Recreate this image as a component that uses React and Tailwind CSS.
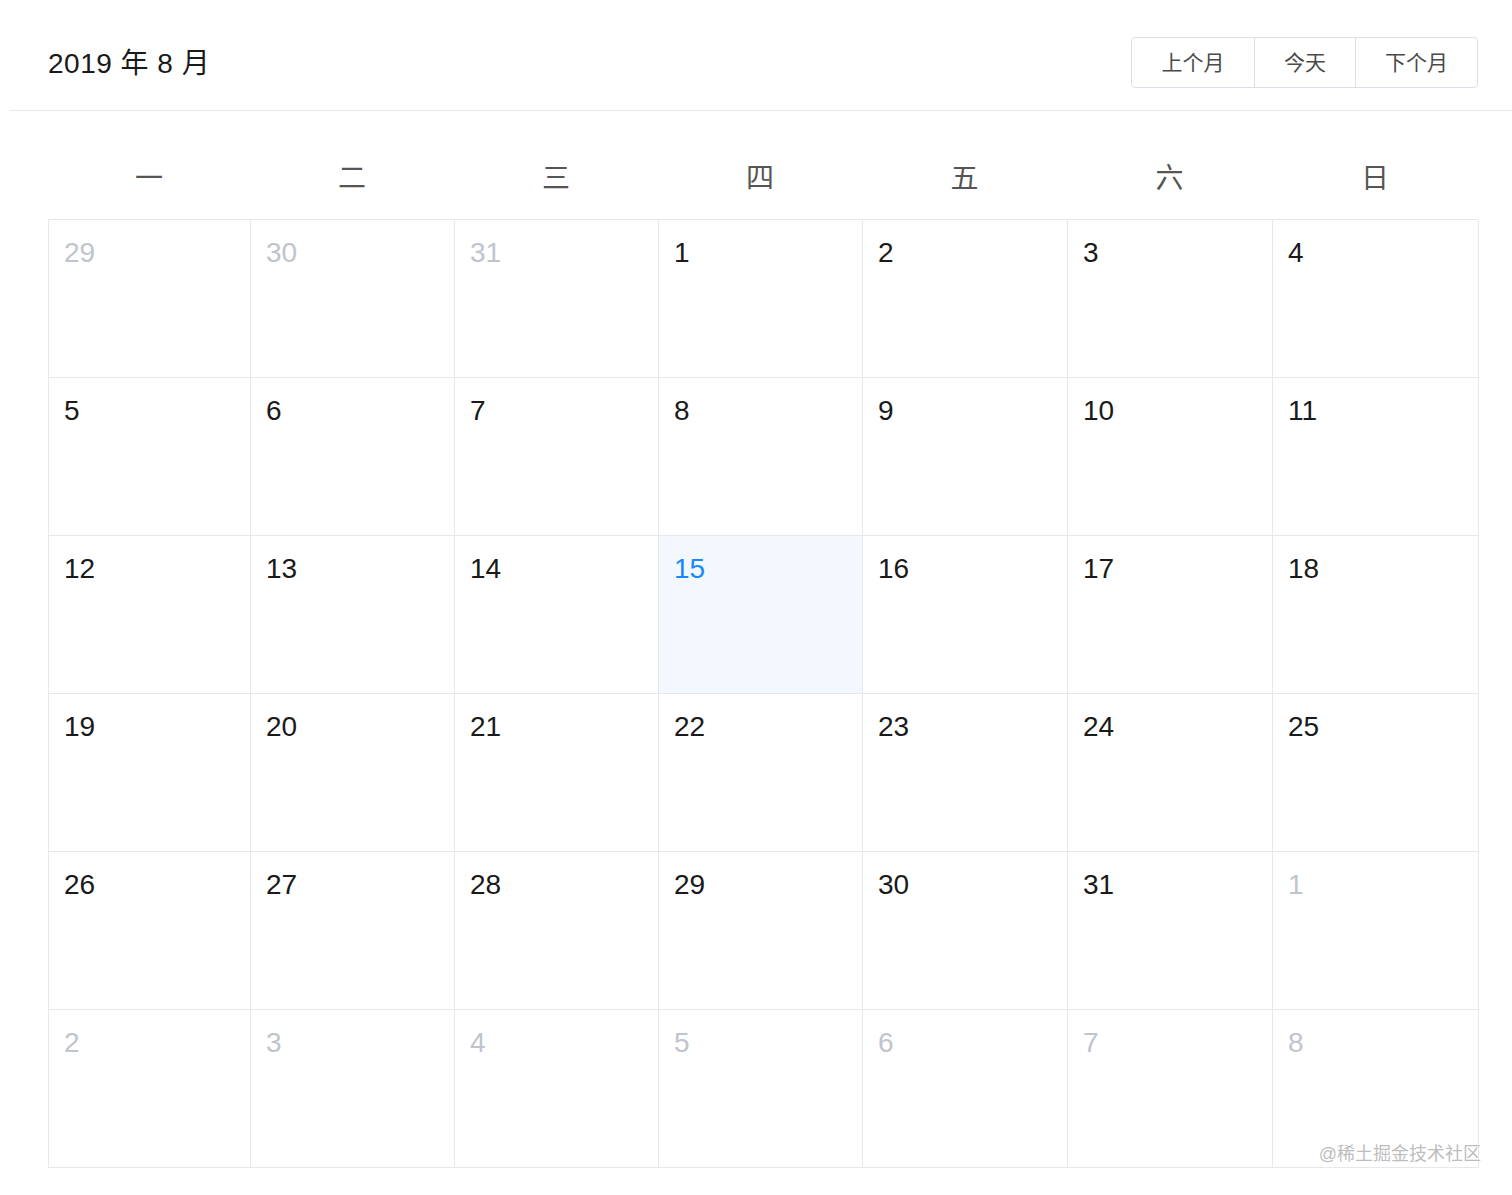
import React from 'react';

const weekdays = ['一', '二', '三', '四', '五', '六', '日'];

// August 2019, weeks start on Monday
const buildDays = () => {
  const days = [];
  [29, 30, 31].forEach((d) => days.push({ d, other: true }));
  for (let d = 1; d <= 31; d++) days.push({ d, other: false, today: d === 15 });
  for (let d = 1; days.length < 42; d++) days.push({ d, other: true });
  return days;
};

export default function App() {
  const days = buildDays();
  const cols = 'grid grid-cols-[202px_204px_204px_204px_205px_205px_206px]';

  return (
    <div
      className="w-[1512px] h-[1195px] bg-white relative overflow-hidden"
      style={{ fontFamily: '"Liberation Sans", Arial, "Noto Sans CJK SC", sans-serif' }}
    >
      {/* 头部 */}
      <div className="ml-[10px] h-[111px] border-b border-[#e8e8e8] flex items-start justify-between pl-[38px] pr-[34px]">
        <div className="pt-[48px] text-[28px] leading-[32px] text-[#1a1a1a] tracking-[0.5px]">2019 年 8 月</div>
        <div className="mt-[37px] flex h-[51px] border border-[#dcdfe6] rounded-[4px] overflow-hidden text-[21px] text-[#4a4a4a]">
          <button className="w-[122px] flex items-center justify-center">上个月</button>
          <button className="w-[101px] flex items-center justify-center border-l border-[#dcdfe6]">今天</button>
          <button className="w-[122px] flex items-center justify-center border-l border-[#dcdfe6]">下个月</button>
        </div>
      </div>

      <div className="ml-[48px] w-[1430px]">
        {/* 星期 */}
        <div className={`${cols} pt-[52px] pb-[24px]`}>
          {weekdays.map((w) => (
            <div key={w} className="text-center text-[28px] leading-[32px] text-[#555]">
              {w}
            </div>
          ))}
        </div>

        {/* 日期格子 */}
        <div className={`${cols} border-t border-l border-[#e6e8ec]`}>
          {days.map((day, i) => (
            <div
              key={i}
              className={`h-[158px] border-r border-b border-[#e6e8ec] pt-[17px] pl-[15px] text-[28px] leading-[32px] ${
                day.today ? 'bg-[#f2f8fe] text-[#1989fa]' : day.other ? 'text-[#c0c4cc]' : 'text-[#1a1a1a]'
              }`}
            >
              {day.d}
            </div>
          ))}
        </div>
      </div>

      <div
        className="absolute right-[31px] top-[1142px] text-[18px] leading-[24px] text-[#bdbdbd]"
        style={{ textShadow: '0 0 2px #fff' }}
      >
        @稀土掘金技术社区
      </div>
    </div>
  );
}
